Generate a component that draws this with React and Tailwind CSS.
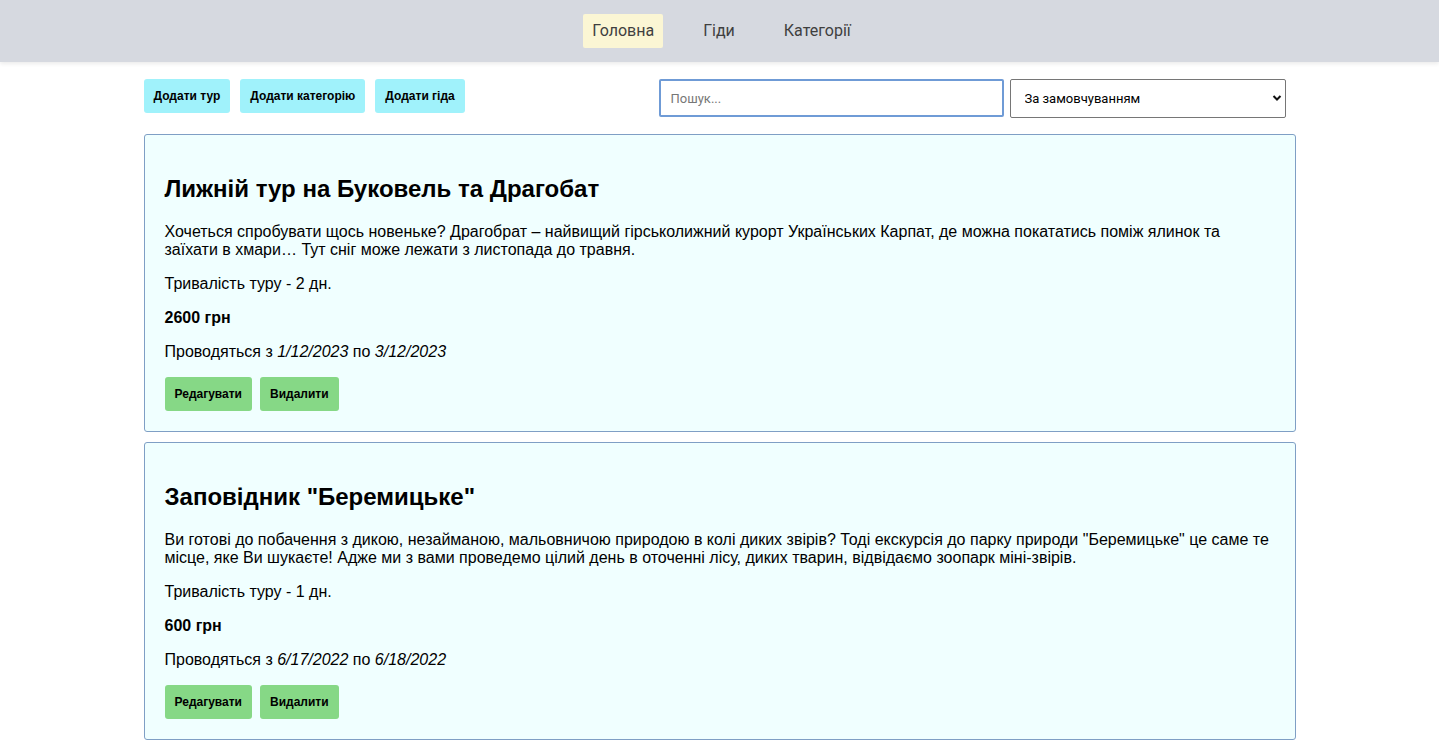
const tours = [
  {
    title: 'Лижній тур на Буковель та Драгобат',
    text: 'Хочеться спробувати щось новеньке? Драгобрат – найвищий гірськолижний курорт Українських Карпат, де можна покататись поміж ялинок та заїхати в хмари… Тут сніг може лежати з листопада до травня.',
    days: 2,
    price: 2600,
    from: '1/12/2023',
    to: '3/12/2023',
  },
  {
    title: 'Заповідник "Беремицьке"',
    text: 'Ви готові до побачення з дикою, незайманою, мальовничою природою в колі диких звірів? Тоді екскурсія до парку природи "Беремицьке" це саме те місце, яке Ви шукаєте! Адже ми з вами проведемо цілий день в оточенні лісу, диких тварин, відвідаємо зоопарк міні-звірів.',
    days: 1,
    price: 600,
    from: '6/17/2022',
    to: '6/18/2022',
  },
];

const navItems = [
  { label: 'Головна', active: true },
  { label: 'Гіди' },
  { label: 'Категорії' },
];

/* ─── Header ─────────────────────────────────────────────────────────────── */
const Header = () => (
  <header className="h-[62px] bg-[#d6d9e0] flex items-center justify-center shadow-[0_2px_4px_rgba(0,0,0,0.08)]">
    <nav className="flex items-center gap-[31px] pl-[4px]">
      {navItems.map(({ label, active }) => (
        <a
          key={label}
          href="#"
          className={`h-[34px] px-[9px] flex items-center rounded-[2px] text-[16px] text-[#3f3f3f] font-['Roboto',sans-serif]
            ${active ? 'bg-[#fbf6d4]' : ''}`}
        >
          {label}
        </a>
      ))}
    </nav>
  </header>
);

const ToolButton = ({ children }) => (
  <button className="h-[34px] px-[10px] rounded-[3px] bg-[#a0f2fb] text-[12px] font-bold text-black">
    {children}
  </button>
);

const CardButton = ({ children }) => (
  <button className="h-[34px] px-[10px] rounded-[3px] bg-[#86d886] text-[12px] font-bold text-black">
    {children}
  </button>
);

/* ─── Toolbar ────────────────────────────────────────────────────────────── */
const Toolbar = () => (
  <div className="flex items-start justify-between pt-[17px]">
    <div className="flex gap-[10px]">
      <ToolButton>Додати тур</ToolButton>
      <ToolButton>Додати категорію</ToolButton>
      <ToolButton>Додати гіда</ToolButton>
    </div>
    <div className="flex gap-[6px] pr-[10px]">
      <input
        placeholder="Пошук..."
        className="w-[345px] h-[38px] px-[10px] border-2 border-[#6f9bd6] rounded-[2px] outline-none text-[13px] font-['Roboto',sans-serif] placeholder:text-[#777]"
      />
      <div className="relative">
        <select className="appearance-none w-[276px] h-[39px] pl-[14px] pr-8 border border-[#767676] rounded-[2px] bg-white text-[13px] text-black font-['Roboto',sans-serif] outline-none">
          <option>За замовчуванням</option>
        </select>
        <svg
          className="absolute right-[4px] top-[15px] pointer-events-none"
          width="10" height="8" viewBox="0 0 10 8"
        >
          <path d="M1.5 2 L5 5.5 L8.5 2" fill="none" stroke="#111" strokeWidth="2" />
        </svg>
      </div>
    </div>
  </div>
);

/* ─── Tour card ──────────────────────────────────────────────────────────── */
const TourCard = ({ tour }) => (
  <div className="bg-[#f0ffff] border border-[#7f9fc5] rounded-[3px] p-[20px] text-black">
    <h2 className="text-[24px] font-bold leading-[28px] my-[20px]">{tour.title}</h2>
    <p className="text-[16px] leading-[18px] mb-[16px]">{tour.text}</p>
    <p className="text-[16px] leading-[18px] mb-[16px]">Тривалість туру - {tour.days} дн.</p>
    <p className="text-[16px] leading-[18px] mb-[16px] font-bold">{tour.price} грн</p>
    <p className="text-[16px] leading-[18px] mb-[16px]">
      Проводяться з <i>{tour.from}</i> по <i>{tour.to}</i>
    </p>
    <div className="flex gap-[8px]">
      <CardButton>Редагувати</CardButton>
      <CardButton>Видалити</CardButton>
    </div>
  </div>
);

export default function App() {
  return (
    <div className="min-h-screen bg-white font-['Liberation_Sans',Arial,sans-serif]">
      <Header />
      <main className="w-[1152px] mx-auto">
        <Toolbar />
        <div className="mt-[16px] flex flex-col gap-[10px] pb-[20px]">
          {tours.map(t => <TourCard key={t.title} tour={t} />)}
        </div>
      </main>
    </div>
  );
}
